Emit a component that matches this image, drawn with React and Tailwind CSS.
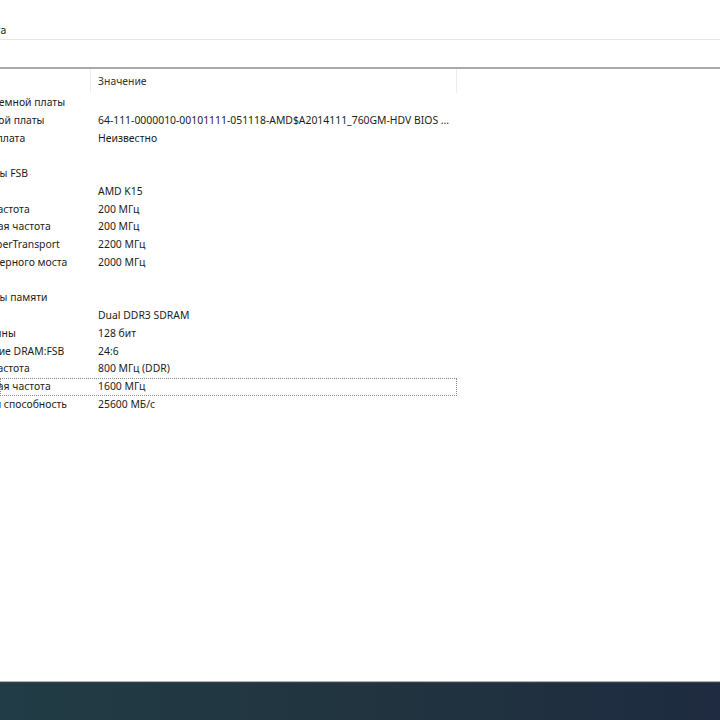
const rows = [
  { kind: 'group', label: 'Свойства системной платы' },
  { label: 'ID системной платы', value: '64-111-0000010-00101111-051118-AMD$A2014111_760GM-HDV BIOS ...', shift: 'ml-[-57px]' },
  { label: 'Системная плата', value: 'Неизвестно', shift: 'ml-[-61px]' },
  { kind: 'gap' },
  { kind: 'group', label: 'Свойства шины FSB' },
  { label: 'Тип шины', value: 'AMD K15' },
  { label: 'Реальная частота', value: '200 МГц' },
  { label: 'Эффективная частота', value: '200 МГц' },
  { label: 'Частота HyperTransport', value: '2200 МГц' },
  { label: 'Частота северного моста', value: '2000 МГц' },
  { kind: 'gap' },
  { kind: 'group', label: 'Свойства шины памяти' },
  { label: 'Тип шины', value: 'Dual DDR3 SDRAM' },
  { label: 'Ширина шины', value: '128 бит' },
  { label: 'Соотношение DRAM:FSB', value: '24:6' },
  { label: 'Реальная частота', value: '800 МГц (DDR)' },
  { label: 'Эффективная частота', value: '1600 МГц', focused: true },
  { label: 'Пропускная способность', value: '25600 МБ/с' },
];

const Row = ({ row }) => {
  if (row.kind === 'gap') return <div className="h-[17.75px]" />;
  const shift = row.kind === 'group' ? 'ml-[-72px]' : row.shift || 'ml-[-59px]';
  return (
    <div
      className={
        'flex h-[17.75px] w-[457px] items-center ' +
        (row.focused ? 'outline outline-1 outline-dotted outline-[#8a8a8a] -outline-offset-1' : '')
      }
    >
      <div className="w-[91px] shrink-0 overflow-hidden whitespace-nowrap">
        <span className={'inline-block ' + shift}>{row.label}</span>
      </div>
      <div className="pl-[7px] whitespace-nowrap">{row.value}</div>
    </div>
  );
};

const App = () => {
  return (
    <div
      className="flex h-[720px] w-[720px] flex-col overflow-hidden bg-white text-[10.4px] text-[#1c1c1c]"
      style={{ fontFamily: '"Noto Sans", "Open Sans", sans-serif' }}
    >
      {/* title strip */}
      <div className="h-[39px] overflow-hidden whitespace-nowrap pt-[23px] leading-[14px]">
        <span className="ml-[-80px] inline-block">Системная плата</span>
      </div>
      <div className="h-px bg-[#e6e6e6]" />
      <div className="h-[27px]" />
      <div className="h-[2px] bg-[#a9a9a9]" />

      {/* column header */}
      <div className="flex h-[24px] items-stretch">
        <div className="w-[90px] shrink-0" />
        <div className="w-px bg-[#ececec]" />
        <div className="flex w-[365px] items-center pl-[7px] pt-[2px] text-[#333]">Значение</div>
        <div className="w-px bg-[#ececec]" />
      </div>

      {/* rows */}
      <div className="flex flex-col pt-[1px]">
        {rows.map((r, i) => (
          <Row key={i} row={r} />
        ))}
      </div>

      <div className="flex-1" />

      {/* taskbar */}
      <div className="h-px bg-[#a9b2ba]" />
      <div className="h-px bg-[#3a4046]" />
      <div className="h-[37px] bg-gradient-to-r from-[#213c46] via-[#21343f] to-[#1e2b40]" />
    </div>
  );
};

export default App;
